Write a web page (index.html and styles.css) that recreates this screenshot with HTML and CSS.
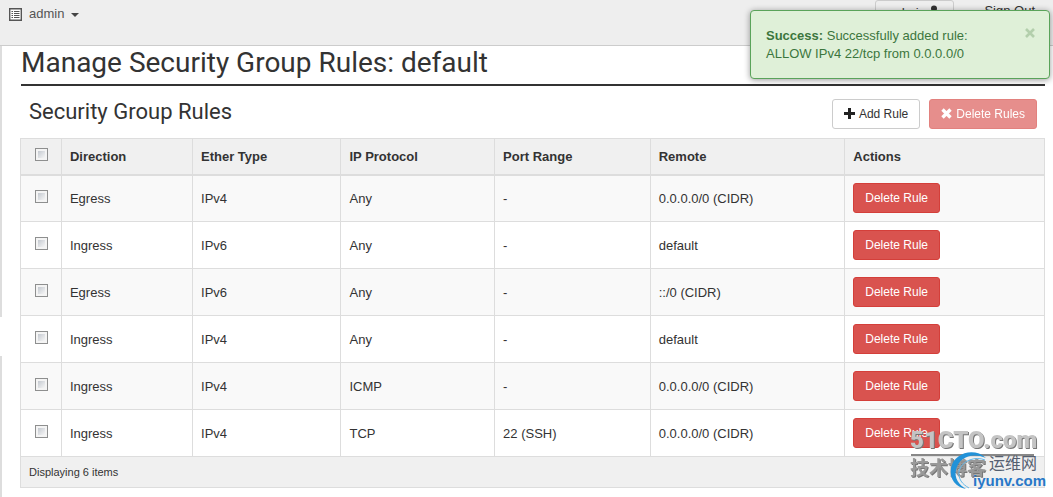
FILE: index.html
```html
<!DOCTYPE html>
<html lang="en">
<head>
<meta charset="utf-8">
<title>Manage Security Group Rules</title>
<link rel="stylesheet" href="styles.css">
</head>
<body>
<header class="topbar">
  <button class="project" type="button">
    <svg width="13" height="13" viewBox="0 0 13 13" aria-hidden="true"><path d="M.7.7h11.6v11.6H.7z" fill="#fff" stroke="#555" stroke-width="1.400"/><path d="M2.500 3.500H4M5 3.500h5.500M2.500 5.500H4M5 5.500h5.500M2.500 7.500H4M5 7.500h5.500M2.500 9.500H4M5 9.500h5.500" stroke="#555"/></svg>
    <span>admin</span>
    <span class="caret"></span>
  </button>
  <nav class="account">
    <button class="user" type="button">admin
      <svg width="10" height="12" viewBox="0 0 10 12" aria-hidden="true"><circle cx="5" cy="3.500" r="3" fill="#333"/><path d="M0 12c0-4 2-5 5-5s5 1 5 5z" fill="#333"/></svg>
    </button>
    <a class="signout" href="#">Sign Out</a>
  </nav>
</header>

<div class="alert" role="alert">
  <p><strong>Success:</strong> Successfully added rule:<br>ALLOW IPv4 22/tcp from 0.0.0.0/0</p>
  <button class="close" type="button" aria-label="Close"><svg width="10" height="10" viewBox="0 0 10 10" aria-hidden="true"><path d="M1 1l8 8M9 1l-8 8" stroke="#b3cfac" stroke-width="2.600"/></svg></button>
</div>

<div class="page">
  <div class="rail"><span class="handle"></span></div>
  <main class="content">
    <h1>Manage Security Group Rules: default</h1>
    <div class="toolbar">
      <h2>Security Group Rules</h2>
      <div class="actions">
        <button class="btn" type="button"><svg width="11" height="11" viewBox="0 0 11 11" aria-hidden="true"><path d="M5.500 0v11M0 5.500h11" stroke="#222" stroke-width="3"/></svg>Add Rule</button>
        <button class="btn danger muted" type="button"><svg width="11" height="11" viewBox="0 0 11 11" aria-hidden="true"><path d="M1.500 1.500l8 8M9.500 1.500l-8 8" stroke="#fff" stroke-width="3.400"/></svg>Delete Rules</button>
      </div>
    </div>
    <table class="rules">
      <colgroup><col class="c-check"><col class="c-dir"><col class="c-ether"><col class="c-proto"><col class="c-port"><col class="c-remote"><col class="c-act"></colgroup>
      <thead>
        <tr><th><input type="checkbox" aria-label="Select all"></th><th>Direction</th><th>Ether Type</th><th>IP Protocol</th><th>Port Range</th><th>Remote</th><th>Actions</th></tr>
      </thead>
      <tbody>
        <tr><td><input type="checkbox" aria-label="Select rule 1"></td><td>Egress</td><td>IPv4</td><td>Any</td><td>-</td><td>0.0.0.0/0 (CIDR)</td><td><button class="btn danger" type="button">Delete Rule</button></td></tr>
        <tr><td><input type="checkbox" aria-label="Select rule 2"></td><td>Ingress</td><td>IPv6</td><td>Any</td><td>-</td><td>default</td><td><button class="btn danger" type="button">Delete Rule</button></td></tr>
        <tr><td><input type="checkbox" aria-label="Select rule 3"></td><td>Egress</td><td>IPv6</td><td>Any</td><td>-</td><td>::/0 (CIDR)</td><td><button class="btn danger" type="button">Delete Rule</button></td></tr>
        <tr><td><input type="checkbox" aria-label="Select rule 4"></td><td>Ingress</td><td>IPv4</td><td>Any</td><td>-</td><td>default</td><td><button class="btn danger" type="button">Delete Rule</button></td></tr>
        <tr><td><input type="checkbox" aria-label="Select rule 5"></td><td>Ingress</td><td>IPv4</td><td>ICMP</td><td>-</td><td>0.0.0.0/0 (CIDR)</td><td><button class="btn danger" type="button">Delete Rule</button></td></tr>
        <tr><td><input type="checkbox" aria-label="Select rule 6"></td><td>Ingress</td><td>IPv4</td><td>TCP</td><td>22 (SSH)</td><td>0.0.0.0/0 (CIDR)</td><td><button class="btn danger" type="button">Delete Rule</button></td></tr>
      </tbody>
      <tfoot><tr><td colspan="7">Displaying 6 items</td></tr></tfoot>
    </table>
  </main>
</div>

<svg class="watermark" width="145" height="75" viewBox="0 0 145 75">
  <text x="2" y="26" class="wm-title">51CTO.com</text>
  <text x="2" y="53" class="wm-cn">技术博客</text>
  <path d="M3 33h123" stroke="#888" stroke-width="2"/>
  <path d="M78 36C66 25 46 31 43 46c-2 11 5 19 15 21-7-4-12-11-10-19 3-13 16-18 30-12z" fill="#2292d8"/>
  <path d="M77 38C68 34 54 38 51 49c-1 8 3 13 10 17" fill="none" stroke="#65b9e9" stroke-width="1"/>
  <text x="81" y="47" class="wm-site">运维网</text>
  <text x="65" y="64" class="wm-url">iyunv.com</text>
</svg>
</body>
</html>
```
FILE: styles.css
```css
* { box-sizing: border-box; }
body {
  margin: 0;
  min-height: 100vh;
  display: flex;
  flex-direction: column;
  background: #fff;
  color: #333;
  font: 13px/18px "Liberation Sans", Arial, sans-serif;
}
button { font: inherit; color: inherit; cursor: pointer; }
h1, h2, p { margin: 0; }

.topbar {
  height: 46px;
  display: flex;
  justify-content: space-between;
  align-items: flex-start;
  padding: 0 18px 0 9px;
  background: #eee;
  border-bottom: 1px solid #ccc;
}
.project {
  display: flex;
  align-items: center;
  gap: 7px;
  padding: 5px 0;
  border: 0;
  background: none;
  color: #555;
}
.caret {
  border: 4px solid transparent;
  border-top-color: #444;
  border-bottom: 0;
  margin-top: 2px;
}
.account { display: flex; align-items: flex-start; gap: 30px; }
.user {
  padding: 3px 14px 6px;
  border: 1px solid #ccc;
  border-radius: 3px;
  background: #eee;
}
.signout { padding-top: 2px; color: #333; text-decoration: none; }

.alert {
  position: absolute;
  top: 10px;
  right: 3px;
  width: 300px;
  display: flex;
  justify-content: space-between;
  align-items: flex-start;
  padding: 16px 14px 15px 15px;
  border: 1px solid #5aa35a;
  border-radius: 4px;
  background: #dff0d8;
  color: #3c763d;
  box-shadow: 0 1px 6px rgba(0, 0, 0, .4);
}
.close { display: flex; padding: 1px 0; border: 0; background: none; }

.page { flex: 1; display: flex; }
.rail {
  width: 2px;
  display: flex;
  flex-direction: column;
  background: #ddd;
}
.handle { height: 39px; margin-top: 271px; background: #fff; }
.content { flex: 1; padding: 0 8px 9px 18px; }

h1, h2 { font-family: Roboto, "Open Sans", sans-serif; font-weight: 400; }
h1 {
  margin-left: 1px;
  padding-bottom: 5px;
  border-bottom: 2px solid #333;
  font-size: 28px;
  line-height: 33px;
}
.toolbar {
  height: 52px;
  display: flex;
  justify-content: space-between;
  align-items: center;
  padding: 3px 8px 0 9px;
}
h2 { font-size: 22px; line-height: 30px; padding-bottom: 3px; }
.actions { display: flex; gap: 9px; }
.btn {
  display: inline-flex;
  align-items: center;
  gap: 4px;
  height: 30px;
  padding: 0 11px;
  border: 1px solid #ccc;
  border-radius: 3px;
  background: #fff;
  font-size: 12px;
  white-space: nowrap;
}
.danger { background: #d9534f; border-color: #d43f3a; color: #fff; }
.muted { opacity: .65; }

.rules {
  width: 100%;
  table-layout: fixed;
  border-collapse: collapse;
}
.c-check { width: 4%; }
.c-dir { width: 12.8%; }
.c-ether { width: 14.5%; }
.c-proto { width: 15%; }
.c-port { width: 15.2%; }
.c-remote { width: 19%; }
.c-act { width: 19.5%; }
.rules th, .rules td {
  padding: 1px 8px 0;
  border: 1px solid #ddd;
  text-align: left;
}
.rules thead th {
  height: 36px;
  border-bottom: 2px solid #ddd;
  background: #f0f0f0;
}
.rules tbody td { height: 47px; }
.rules tbody td:last-child { padding-top: 0; }
.rules tbody tr:nth-child(odd) { background: #f9f9f9; }
.rules tfoot td { height: 31px; padding-top: 0; background: #f0f0f0; font-size: 11px; }
.rules th:first-child, .rules tbody td:first-child { padding-top: 0; }
.rules input {
  appearance: none;
  display: block;
  width: 13px;
  height: 13px;
  margin: 0 0 4px 6px;
  border: 1px solid #8e8f8f;
  background: linear-gradient(135deg, #c4c9d0, #f6f6f6) content-box, #f4f4f4;
  padding: 2px;
}

.watermark { position: absolute; top: 422px; right: 0; pointer-events: none; }
.wm-title, .wm-cn { filter: drop-shadow(1px 1px 0 #777); }
.wm-title { font: 900 24px Roboto, sans-serif; fill: #c4c4c4; }
.wm-cn { font: bold 19px "Noto Sans CJK SC", sans-serif; fill: #999; }
.wm-site { font: 16px "Noto Sans CJK SC", sans-serif; fill: #555f70; }
.wm-url { font: bold 15px "Liberation Sans", sans-serif; fill: #2878c8; }
```
